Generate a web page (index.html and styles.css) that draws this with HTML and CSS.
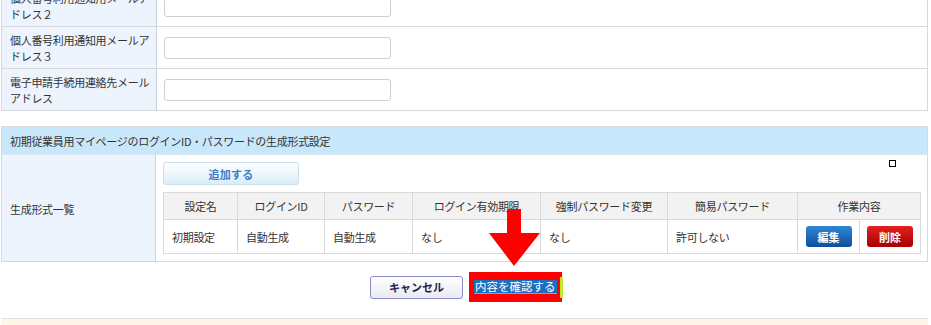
FILE: index.html
```html
<!DOCTYPE html>
<html lang="ja">
<head>
    <meta charset="UTF-8">
    <title>生成形式設定</title>
    <link rel="stylesheet" href="styles.css">
</head>
<body>

    <div class="page">

        <!-- Mail address rows -->
        <table class="form-table first">
            <tr>
                <th class="label">個人番号利用通知用メールアドレス２</th>
                <td class="field"><input type="text" class="text-input"></td>
            </tr>
            <tr>
                <th class="label">個人番号利用通知用メールアドレス３</th>
                <td class="field"><input type="text" class="text-input"></td>
            </tr>
            <tr>
                <th class="label">電子申請手続用連絡先メールアドレス</th>
                <td class="field"><input type="text" class="text-input"></td>
            </tr>
        </table>

        <!-- Login ID / password format -->
        <table class="form-table section">
            <tr>
                <th class="section-head" colspan="2">初期従業員用マイページのログインID・パスワードの生成形式設定</th>
            </tr>
            <tr>
                <th class="label tall">生成形式一覧</th>
                <td class="content">
                    <button class="btn-add">追加する</button>
                    <table class="list">
                        <colgroup>
                            <col style="width:74px">
                            <col style="width:87px">
                            <col style="width:88px">
                            <col style="width:128px">
                            <col style="width:127px">
                            <col style="width:130px">
                            <col style="width:62px">
                            <col style="width:61px">
                        </colgroup>
                        <tr>
                            <th>設定名</th>
                            <th>ログインID</th>
                            <th>パスワード</th>
                            <th>ログイン有効期限</th>
                            <th>強制パスワード変更</th>
                            <th>簡易パスワード</th>
                            <th colspan="2">作業内容</th>
                        </tr>
                        <tr>
                            <td>初期設定</td>
                            <td>自動生成</td>
                            <td>自動生成</td>
                            <td>なし</td>
                            <td>なし</td>
                            <td>許可しない</td>
                            <td class="op"><button class="btn-small btn-edit">編集</button></td>
                            <td class="op"><button class="btn-small btn-delete">削除</button></td>
                        </tr>
                    </table>
                </td>
            </tr>
        </table>

        <!-- Bottom actions -->
        <div class="actions">
            <button class="btn-cancel">キャンセル</button>
            <div class="confirm-box">
                <span class="confirm-text">内容を確認する</span>
                <span class="confirm-edge"></span>
            </div>
        </div>

        <div class="footer-band"></div>

        <!-- Annotation overlays -->
        <svg class="arrow" viewBox="0 0 51 58" width="51" height="58">
            <rect x="18" y="0" width="14" height="25" fill="#ff0000"/>
            <polygon points="0,24 51,24 25,57" fill="#ff0000"/>
        </svg>
        <span class="marker"></span>

    </div>

</body>
</html>
```

FILE: styles.css
```css
/* General styles */
body {
    margin: 0;
    padding: 0;
    background-color: #fff;
    color: #333;
    font-family: "Noto Sans CJK JP", "Noto Sans", sans-serif;
    font-size: 11px;
    letter-spacing: -0.3px;
    overflow: hidden;
}

.page {
    position: relative;
    display: flow-root;
    padding: 0 3px 0 1px;
    height: 325px;
}

/* Form tables */
.form-table {
    width: 100%;
    border-collapse: collapse;
    border: 1px solid #d9d9d9;
}

.form-table.first {
    margin-top: -16px;
}

.form-table.section {
    margin-top: 15px;
}

.form-table th,
.form-table td {
    border: 1px solid #d9d9d9;
}

.label {
    width: 144px;
    padding: 5px 2px 4px 8px;
    background-color: #edf4fd;
    border-right-color: #c9d3de !important;
    text-align: left;
    font-weight: normal;
    line-height: 16px;
    height: 32px;
}

.field {
    padding: 0 7px;
    vertical-align: middle;
}

.text-input {
    display: block;
    box-sizing: border-box;
    width: 227px;
    height: 22px;
    margin: 0;
    border: 1px solid #cfcfcf;
    border-radius: 3px;
    background-color: #fff;
}

.section-head {
    height: 27px;
    padding: 0 8px;
    background-color: #c9e7fb;
    text-align: left;
    font-weight: normal;
    border-bottom-color: #d6e6f2 !important;
}

.content {
    padding: 7px 6px 7px 7px;
    vertical-align: top;
}

.btn-add {
    display: block;
    width: 136px;
    height: 23px;
    margin: 0 0 7px;
    border: 1px solid #cfdfe8;
    border-radius: 3px;
    background: linear-gradient(#ffffff, #d7eef9);
    color: #3d7dc8;
    font-family: inherit;
    font-size: 11px;
    font-weight: bold;
    letter-spacing: 0.3px;
    cursor: pointer;
}

/* Inner list */
.list {
    width: 757px;
    table-layout: fixed;
    border-collapse: collapse;
}

.list th,
.list td {
    border: 1px solid #d9d9d9;
}

.list th {
    height: 26px;
    padding: 0;
    background-color: #f2f2f2;
    font-weight: normal;
    text-align: center;
}

.list td {
    height: 33px;
    padding: 0 8px;
    text-align: left;
}

.list td.op {
    padding: 0;
    text-align: center;
}

.btn-small {
    width: 46px;
    height: 21px;
    border: none;
    border-radius: 3px;
    color: #fff;
    font-family: inherit;
    font-size: 11px;
    font-weight: bold;
    cursor: pointer;
}

.btn-edit {
    background: linear-gradient(#2f86d6, #0b4f9c);
}

.btn-delete {
    background: linear-gradient(#e42020, #a50000);
}

/* Actions */
.actions {
    display: flex;
    justify-content: center;
    align-items: center;
    gap: 6px;
    padding: 10px 0 16px 3px;
}

.btn-cancel {
    width: 93px;
    height: 23px;
    border: 1px solid #8b8bc9;
    border-radius: 3px;
    background: linear-gradient(#ffffff, #e9e9f1);
    color: #1d1d4f;
    font-family: inherit;
    font-size: 11px;
    font-weight: bold;
    cursor: pointer;
}

.confirm-box {
    display: flex;
    align-items: center;
    box-sizing: border-box;
    width: 93px;
    height: 30px;
    padding-left: 5px;
    background-color: #ff0000;
}

.confirm-text {
    display: block;
    height: 13px;
    line-height: 13px;
    padding: 0 1px;
    background-color: #1c6ec1;
    border-bottom: 1px solid #7fd000;
    color: #fff;
    font-size: 11.5px;
    letter-spacing: 0;
    white-space: nowrap;
}

.confirm-edge {
    width: 3px;
    height: 21px;
    margin-left: auto;
    margin-right: -1px;
    background-color: #c4e62a;
}

.footer-band {
    height: 10px;
    border-top: 1px solid #e6e1d8;
    background-color: #fdf6e9;
}

/* Overlays */
.arrow {
    position: absolute;
    left: 489px;
    top: 209px;
}

.marker {
    position: absolute;
    left: 889px;
    top: 160px;
    width: 5px;
    height: 5px;
    border: 1px solid #000;
    background-color: #fff;
}
```
